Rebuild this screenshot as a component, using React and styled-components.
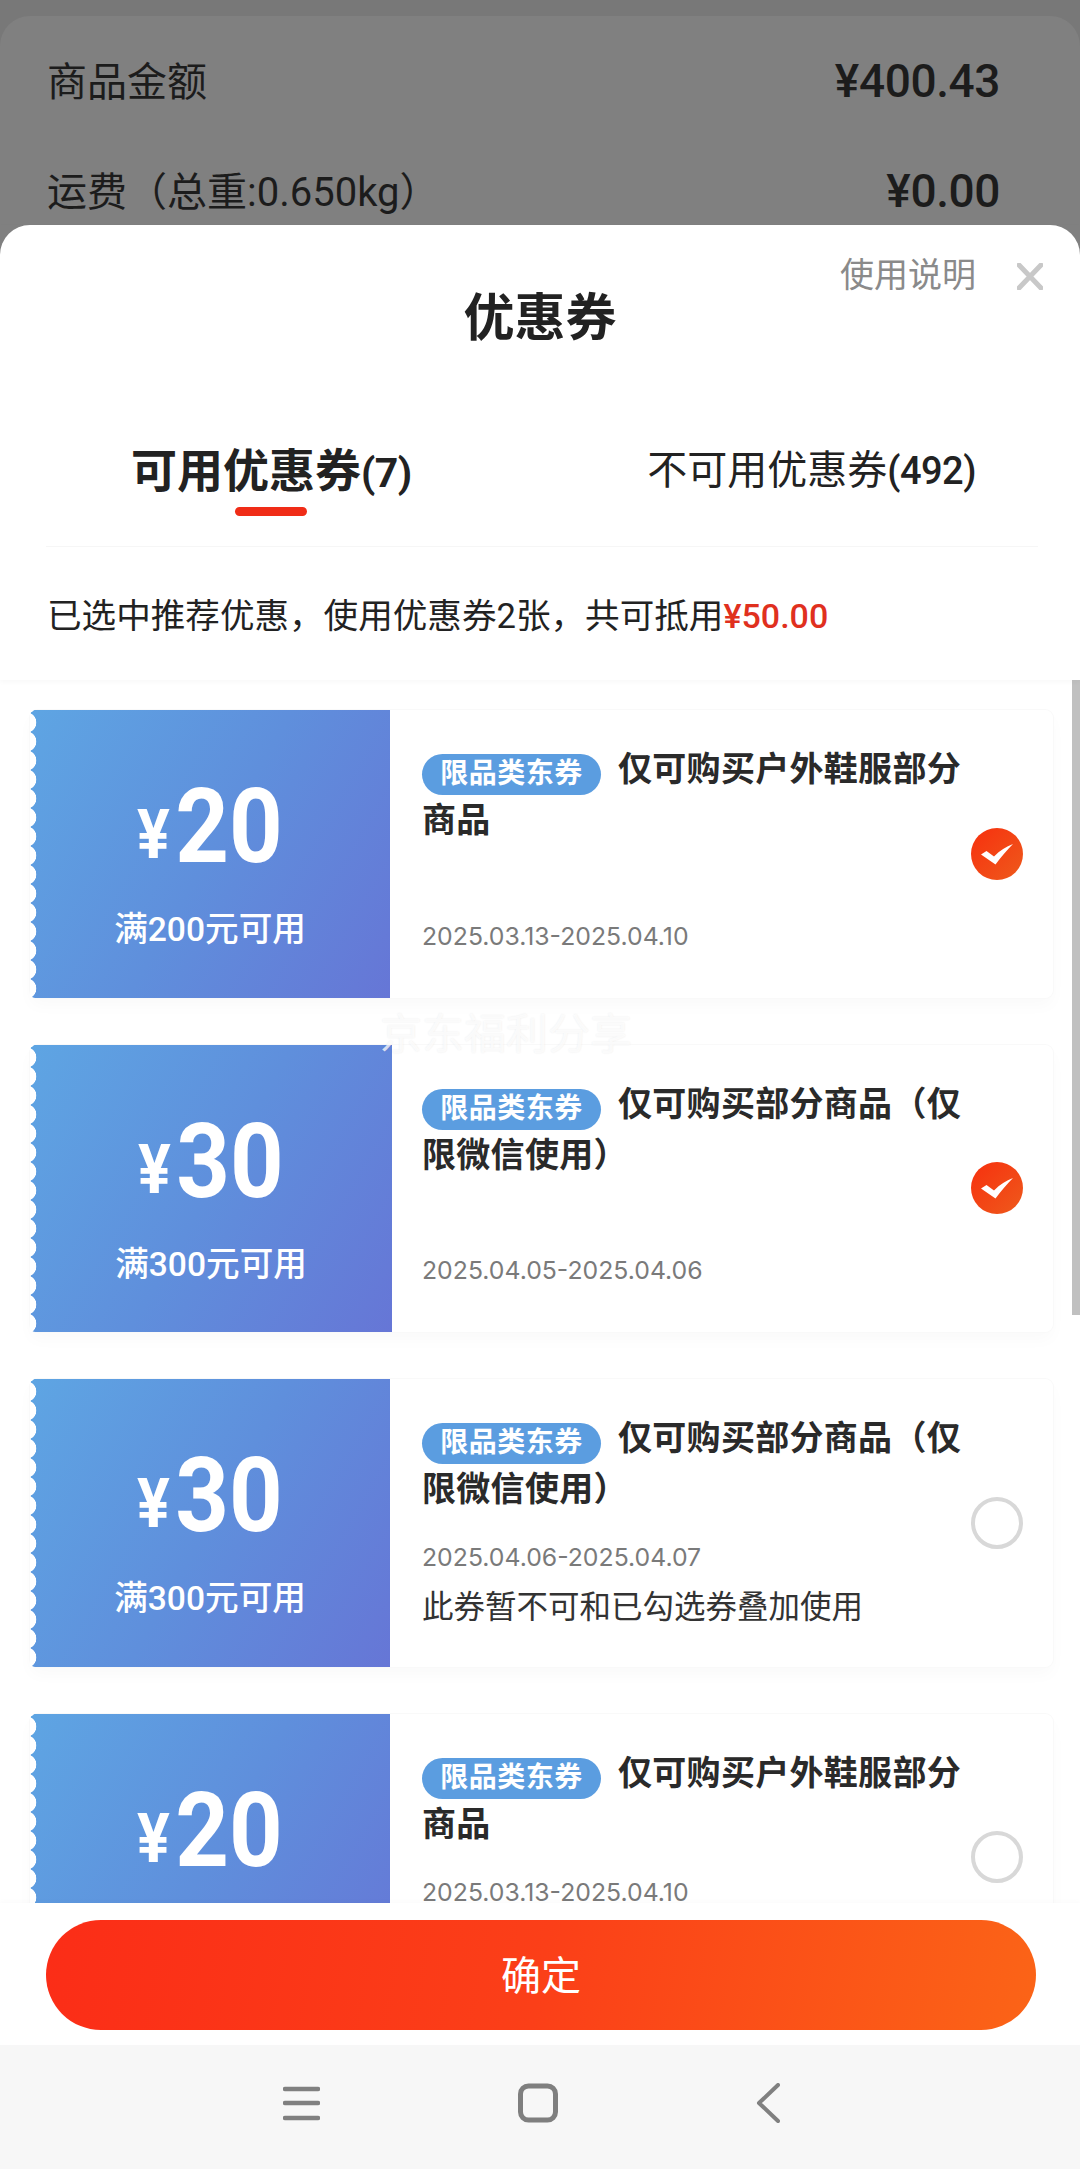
import React from "react";
import styled, { createGlobalStyle } from "styled-components";

const Global = createGlobalStyle`
  html, body { margin: 0; padding: 0; background: #fff; }
  * { box-sizing: border-box; }
  body { font-family: Roboto, "Noto Sans CJK SC", sans-serif; }
`;

const Page = styled.div`
  width: 1080px;
  height: 2169px;
  display: flex;
  flex-direction: column;
  overflow: hidden;
`;
const Screen = styled.div`
  position: relative;
  flex: 1;
  background: #787878;
  overflow: hidden;
`;
const Backdrop = styled.div`
  margin-top: 16px;
  height: 400px;
  background: #808080;
  border-radius: 30px 30px 0 0;
  padding: 33px 80px 0 47px;
`;
const PriceRow = styled.div`
  display: flex;
  justify-content: space-between;
  align-items: center;
  height: 60px;
  margin-bottom: 50px;
  color: #1c1c1c;
  font-size: 40px;
`;
const PriceValue = styled.span`
  font-size: 46px;
  font-weight: 500;
  letter-spacing: -0.4px;
  position: relative;
  top: 2px;
`;
const Sheet = styled.div`
  position: absolute;
  top: 225px;
  left: 0;
  right: 0;
  bottom: 0;
  display: flex;
  flex-direction: column;
  background: #fff;
  border-radius: 30px 30px 0 0;
`;
const Header = styled.header`
  position: relative;
  z-index: 2;
  height: 455px;
  padding-top: 64px;
  box-shadow: 0 2px 5px rgba(0, 0, 0, 0.03);
`;
const Title = styled.h1`
  margin: 0;
  height: 60px;
  line-height: 60px;
  text-align: center;
  font-size: 51px;
  font-weight: 700;
  color: #222;
`;
const HeaderActions = styled.div`
  position: absolute;
  top: 26px;
  right: 37px;
  display: flex;
  align-items: center;
  gap: 41px;
  height: 50px;
`;
const HelpLink = styled.span`
  font-size: 34px;
  line-height: 44px;
  margin-top: -2px;
  color: #8a8a8a;
`;
const Tabs = styled.div`
  display: flex;
  justify-content: space-between;
  align-items: center;
  margin: 92px 42px 0 46px;
  padding: 0 62px 45px 85px;
  border-bottom: 1px solid #f6f6f6;
`;
const Tab = styled.div`
  position: relative;
  height: 60px;
  line-height: 60px;
  color: #222;
  font-size: ${(p) => (p.$active ? 46 : 40)}px;
  font-weight: ${(p) => (p.$active ? 700 : 400)};
  ${(p) =>
    p.$active &&
    `&::after {
      content: "";
      position: absolute;
      left: 104px;
      top: 66px;
      width: 72px;
      height: 9px;
      border-radius: 5px;
      background: #f02c17;
    }`}
`;
const TabCount = styled.span`
  font-weight: ${(p) => (p.$active ? 700 : 500)};
  font-size: ${(p) => (p.$active ? 41 : 38)}px;
  letter-spacing: -0.5px;
`;
const Summary = styled.div`
  margin: 44px 0 0 47px;
  line-height: 50px;
  font-size: 34.6px;
  color: #222;
`;
const Saving = styled.span`
  color: #e0301e;
  font-weight: 500;
  font-size: 34px;
`;
const List = styled.div`
  position: relative;
  flex: 1;
  min-height: 0;
  overflow: hidden;
  display: flex;
  flex-direction: column;
  gap: 47px;
  padding: 30px 27px 0 30px;
`;
const Scrollbar = styled.div`
  position: absolute;
  top: 0;
  right: 0;
  width: 8px;
  height: 635px;
  background: #c0c0c0;
`;
const Watermark = styled.div`
  position: absolute;
  left: 380px;
  top: 325px;
  font-size: 42px;
  line-height: 60px;
  color: rgba(255, 255, 255, 0.75);
  text-shadow: 0 0 2px rgba(0, 0, 0, 0.08);
  white-space: nowrap;
`;
const Card = styled.article`
  flex: none;
  display: flex;
  height: 287.5px;
  background: #fff;
  border-radius: 8px;
  box-shadow: 0 0 0 1px #f9f9f9, 0 8px 16px rgba(0, 0, 0, 0.025);
`;
const Stub = styled.div`
  position: relative;
  flex: none;
  width: ${(p) => p.$width}px;
  display: flex;
  flex-direction: column;
  align-items: center;
  padding-top: 67px;
  color: #fff;
  background: linear-gradient(120deg, #5ea5e3 0%, #5f8fdc 50%, #6676d6 100%);
  border-radius: 5px 0 0 5px;
  &::before {
    content: "";
    position: absolute;
    left: 0;
    top: 0;
    bottom: 0;
    width: 7px;
    background: radial-gradient(circle at -4px 50%, #fff 10px, rgba(255, 255, 255, 0) 10.6px) 0 3px / 7px 19px repeat-y;
  }
`;
const Amount = styled.div`
  display: flex;
  align-items: flex-end;
  height: 100px;
  transform: scaleX(0.9);
  font-weight: 700;
  line-height: 100px;
`;
const Yen = styled.span`
  font-size: 68px;
  line-height: 84px;
  margin-right: 6px;
`;
const Digits = styled.span`
  font-size: 104px;
`;
const Threshold = styled.div`
  margin-top: 31px;
  font-size: 33.6px;
  line-height: 44px;
  font-weight: 500;
`;
const Info = styled.div`
  flex: 1;
  min-width: 0;
  display: flex;
  flex-direction: column;
  padding: 34px 0 44px ${(p) => 392 - p.$stub}px;
`;
const CardTitle = styled.div`
  font-size: 34px;
  line-height: 50px;
  font-weight: 700;
  letter-spacing: 0.3px;
  color: #2a2a2a;
`;
const Badge = styled.span`
  display: inline-block;
  width: 179px;
  height: 41px;
  margin-right: 17px;
  border-radius: 21px;
  background: #5b9de0;
  color: #fff;
  font-size: 28px;
  line-height: 40px;
  letter-spacing: 0.5px;
  text-align: center;
  vertical-align: -2px;
`;
const DateLine = styled.div`
  margin-top: ${(p) => (p.$tight ? "25px" : "auto")};
  font-family: Inter, "Noto Sans CJK SC", sans-serif;
  font-size: 24.8px;
  line-height: 36px;
  color: #7a7a7a;
`;
const Note = styled.div`
  margin-top: 11px;
  font-size: 31.5px;
  line-height: 44px;
  color: #333;
`;
const SelectSlot = styled.div`
  flex: none;
  align-self: center;
  width: 52px;
  height: 52px;
  margin-right: 30px;
  svg { display: block; }
`;
const Radio = styled.div`
  width: 52px;
  height: 52px;
  border-radius: 50%;
  border: 4px solid #d8d8d8;
`;
const Footer = styled.div`
  position: relative;
  z-index: 2;
  flex: none;
  height: 142px;
  padding: 17px 44px 0 46px;
  background: #fff;
  box-shadow: 0 -2px 5px rgba(0, 0, 0, 0.02);
`;
const ConfirmButton = styled.button`
  display: block;
  width: 100%;
  height: 110px;
  padding: 0 0 4px;
  border: 0;
  border-radius: 55px;
  background: linear-gradient(100deg, #fb2d17 0%, #fb3f18 50%, #fb6417 100%);
  color: #fff;
  font-family: inherit;
  font-size: 40px;
`;
const NavBar = styled.nav`
  flex: none;
  height: 124px;
  display: flex;
  justify-content: center;
  align-items: flex-start;
  gap: 198px;
  padding: 38px 18px 0 0;
  background: #f7f7f7;
  svg { display: block; }
`;

const CheckIcon = ({ id }) => (
  <svg width="52" height="52" viewBox="0 0 52 52">
    <defs>
      <linearGradient id={id} x1="0" y1="0" x2="1" y2="1">
        <stop offset="0" stopColor="#f7300e" />
        <stop offset="1" stopColor="#ee5a1c" />
      </linearGradient>
    </defs>
    <circle cx="26" cy="26" r="26" fill={`url(#${id})`} />
    <path d="M10 26.5 L15.5 23 L23 28.5 C29 22.5 35 18.5 42 16 C36 22 30 29 24.5 36.5 Z" fill="#fff" />
  </svg>
);

const coupons = [
  { value: 20, min: 200, width: 360, title: "仅可购买户外鞋服部分商品", date: "2025.03.13-2025.04.10", checked: true },
  { value: 30, min: 300, width: 362, title: "仅可购买部分商品（仅限微信使用）", date: "2025.04.05-2025.04.06", checked: true },
  { value: 30, min: 300, width: 360, title: "仅可购买部分商品（仅限微信使用）", date: "2025.04.06-2025.04.07", note: "此券暂不可和已勾选券叠加使用" },
  { value: 20, min: 200, width: 360, title: "仅可购买户外鞋服部分商品", date: "2025.03.13-2025.04.10", note: "此券暂不可和已勾选券叠加使用" },
];

export default function App() {
  return (
    <Page>
      <Global />
      <Screen>
        <Backdrop>
          <PriceRow>
            <span>商品金额</span>
            <PriceValue>¥400.43</PriceValue>
          </PriceRow>
          <PriceRow>
            <span>运费（总重:0.650kg）</span>
            <PriceValue>¥0.00</PriceValue>
          </PriceRow>
        </Backdrop>
        <Sheet>
          <Header>
            <Title>优惠券</Title>
            <HeaderActions>
              <HelpLink>使用说明</HelpLink>
              <svg width="26" height="27" viewBox="0 0 26 27">
                <path d="M2 2 L24 25 M24 2 L2 25" stroke="#c8c8c8" strokeWidth="5" strokeLinecap="round" />
              </svg>
            </HeaderActions>
            <Tabs>
              <Tab $active>可用优惠券<TabCount $active>(7)</TabCount></Tab>
              <Tab>不可用优惠券<TabCount>(492)</TabCount></Tab>
            </Tabs>
            <Summary>
              已选中推荐优惠，使用优惠券2张，共可抵用<Saving>¥50.00</Saving>
            </Summary>
          </Header>
          <List>
            {coupons.map((c, i) => (
              <Card key={i}>
                <Stub $width={c.width}>
                  <Amount>
                    <Yen>¥</Yen>
                    <Digits>{c.value}</Digits>
                  </Amount>
                  <Threshold>满{c.min}元可用</Threshold>
                </Stub>
                <Info $stub={c.width}>
                  <CardTitle>
                    <Badge>限品类东券</Badge>
                    {c.title}
                  </CardTitle>
                  <DateLine $tight={!!c.note}>{c.date}</DateLine>
                  {c.note && <Note>{c.note}</Note>}
                </Info>
                <SelectSlot>{c.checked ? <CheckIcon id={`check-${i}`} /> : <Radio />}</SelectSlot>
              </Card>
            ))}
            <Watermark>京东福利分享</Watermark>
            <Scrollbar />
          </List>
          <Footer>
            <ConfirmButton>确定</ConfirmButton>
          </Footer>
        </Sheet>
      </Screen>
      <NavBar>
        <svg width="37" height="40" viewBox="0 0 37 40">
          <path d="M2 6 H35 M2 20 H35 M2 35 H35" stroke="#808080" strokeWidth="4.5" strokeLinecap="round" />
        </svg>
        <svg width="40" height="40" viewBox="0 0 40 40">
          <rect x="2.5" y="3" width="35" height="34" rx="8" fill="none" stroke="#7f7f7f" strokeWidth="5" />
        </svg>
        <svg width="24" height="40" viewBox="0 0 24 40">
          <path d="M22 2 L3 20 L22 38" fill="none" stroke="#808080" strokeWidth="4" strokeLinecap="round" strokeLinejoin="round" />
        </svg>
      </NavBar>
    </Page>
  );
}
